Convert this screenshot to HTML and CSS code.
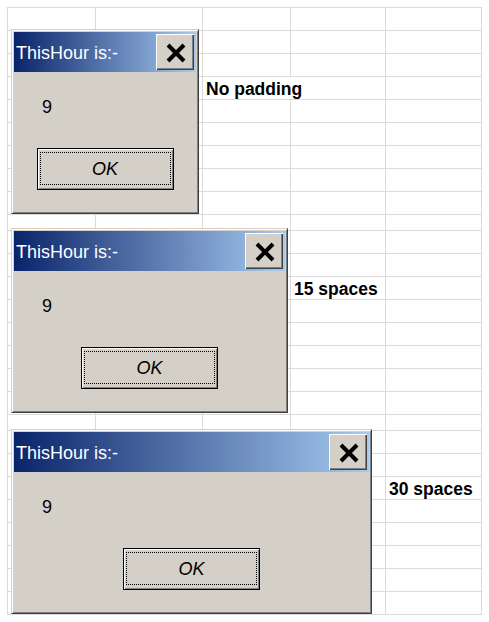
FILE: index.html
```html
<!DOCTYPE html>
<html lang="en">
<head>
<meta charset="utf-8">
<title>ThisHour message boxes</title>
<link rel="stylesheet" href="styles.css">
</head>
<body>
<div class="sheet">
  <div class="cell"></div><div class="cell"></div><div class="cell"></div><div class="cell"></div><div class="cell"></div>
  <div class="cell"></div><div class="cell"></div><div class="cell"></div><div class="cell"></div><div class="cell"></div>
  <div class="cell"></div><div class="cell"></div><div class="cell"></div><div class="cell"></div><div class="cell"></div>
  <div class="cell"></div><div class="cell"></div><div class="cell label span2">No padding</div><div class="cell"></div>
  <div class="cell"></div><div class="cell"></div><div class="cell"></div><div class="cell"></div><div class="cell"></div>
  <div class="cell"></div><div class="cell"></div><div class="cell"></div><div class="cell"></div><div class="cell"></div>
  <div class="cell"></div><div class="cell"></div><div class="cell"></div><div class="cell"></div><div class="cell"></div>
  <div class="cell"></div><div class="cell"></div><div class="cell"></div><div class="cell"></div><div class="cell"></div>
  <div class="cell"></div><div class="cell"></div><div class="cell"></div><div class="cell"></div><div class="cell"></div>
  <div class="cell"></div><div class="cell"></div><div class="cell"></div><div class="cell"></div><div class="cell"></div>
  <div class="cell"></div><div class="cell"></div><div class="cell"></div><div class="cell"></div><div class="cell"></div>
  <div class="cell"></div><div class="cell"></div><div class="cell"></div><div class="cell"></div><div class="cell"></div>
  <div class="cell"></div><div class="cell"></div><div class="cell"></div><div class="cell label">15 spaces</div><div class="cell"></div>
  <div class="cell"></div><div class="cell"></div><div class="cell"></div><div class="cell"></div><div class="cell"></div>
  <div class="cell"></div><div class="cell"></div><div class="cell"></div><div class="cell"></div><div class="cell"></div>
  <div class="cell"></div><div class="cell"></div><div class="cell"></div><div class="cell"></div><div class="cell"></div>
  <div class="cell"></div><div class="cell"></div><div class="cell"></div><div class="cell"></div><div class="cell"></div>
  <div class="cell"></div><div class="cell"></div><div class="cell"></div><div class="cell"></div><div class="cell"></div>
  <div class="cell"></div><div class="cell"></div><div class="cell"></div><div class="cell"></div><div class="cell"></div>
  <div class="cell"></div><div class="cell"></div><div class="cell"></div><div class="cell"></div><div class="cell"></div>
  <div class="cell"></div><div class="cell"></div><div class="cell"></div><div class="cell"></div><div class="cell"></div>
  <div class="cell"></div><div class="cell"></div><div class="cell"></div><div class="cell"></div><div class="cell label">30 spaces</div>
  <div class="cell"></div><div class="cell"></div><div class="cell"></div><div class="cell"></div><div class="cell"></div>
  <div class="cell"></div><div class="cell"></div><div class="cell"></div><div class="cell"></div><div class="cell"></div>
  <div class="cell"></div><div class="cell"></div><div class="cell"></div><div class="cell"></div><div class="cell"></div>
  <div class="cell"></div><div class="cell"></div><div class="cell"></div><div class="cell"></div><div class="cell"></div>
  <div class="cell"></div><div class="cell"></div><div class="cell"></div><div class="cell"></div><div class="cell"></div>
</div>

<div class="msgbox msgbox-1">
  <div class="titlebar">
    <span class="title">ThisHour is:-</span>
    <button class="close" type="button" aria-label="Close"><svg width="20" height="20" viewBox="0 0 20 20"><path d="M2 2L18 18M18 2L2 18" stroke="#000" stroke-width="4" fill="none"/></svg></button>
  </div>
  <div class="content">
    <div class="prompt">9</div>
    <button class="ok" type="button">OK</button>
  </div>
</div>

<div class="msgbox msgbox-2">
  <div class="titlebar">
    <span class="title">ThisHour is:-               </span>
    <button class="close" type="button" aria-label="Close"><svg width="20" height="20" viewBox="0 0 20 20"><path d="M2 2L18 18M18 2L2 18" stroke="#000" stroke-width="4" fill="none"/></svg></button>
  </div>
  <div class="content">
    <div class="prompt">9</div>
    <button class="ok" type="button">OK</button>
  </div>
</div>

<div class="msgbox msgbox-3">
  <div class="titlebar">
    <span class="title">ThisHour is:-                              </span>
    <button class="close" type="button" aria-label="Close"><svg width="20" height="20" viewBox="0 0 20 20"><path d="M2 2L18 18M18 2L2 18" stroke="#000" stroke-width="4" fill="none"/></svg></button>
  </div>
  <div class="content">
    <div class="prompt">9</div>
    <button class="ok" type="button">OK</button>
  </div>
</div>
</body>
</html>
```

FILE: styles.css
```css
* {
  box-sizing: border-box;
}

body {
  margin: 0;
  background: #fff;
  position: relative;
  width: 489px;
  height: 622px;
  overflow: hidden;
  font-family: "Liberation Sans", Arial, sans-serif;
}

.sheet {
  margin: 7px 0 0 7px;
  width: 475px;
  display: grid;
  grid-template-columns: 87px 106px 87px 94px 95px;
  grid-template-rows: repeat(9, 22px) 15px repeat(8, 22px) 15px repeat(8, 22px);
  gap: 1px;
  background: #dadada;
  border: 1px solid #dadada;
}

.cell {
  background: #fff;
}

.label {
  display: flex;
  align-items: flex-end;
  padding-left: 3px;
  font-size: 17.5px;
  font-weight: bold;
  line-height: 20px;
  color: #000;
  white-space: nowrap;
}

.span2 {
  grid-column: span 2;
}

.msgbox {
  position: absolute;
  left: 11px;
  height: 185px;
  display: flex;
  flex-direction: column;
  padding: 2px;
  background: #d4d0c8;
  border: 1px solid;
  border-color: #d4d0c8 #404040 #404040 #d4d0c8;
  box-shadow: inset 1px 1px 0 #fff, inset -1px -1px 0 #808080;
}

.msgbox-1 {
  top: 29px;
  width: 188px;
}

.msgbox-2 {
  top: 228px;
  width: 277px;
}

.msgbox-3 {
  top: 429px;
  width: 361px;
}

.titlebar {
  height: 40px;
  flex: none;
  display: flex;
  align-items: center;
  justify-content: space-between;
  padding: 0 2px;
  background: linear-gradient(to right, #0a246a, #a6caf0);
}

.title {
  margin-top: 2px;
  color: #fff;
  font-size: 18px;
  line-height: 20px;
  white-space: pre;
}

.close {
  width: 38px;
  height: 36px;
  flex: none;
  display: flex;
  align-items: center;
  justify-content: center;
  padding: 0;
  border: 0;
  background: #d4d0c8;
  box-shadow: inset 1px 1px 0 #fff, inset -1px -1px 0 #404040, inset -2px -2px 0 #808080;
}

.close svg {
  display: block;
  margin: 1px 0 0 2px;
}

.content {
  flex: 1;
  display: flex;
  flex-direction: column;
  padding-top: 25px;
}

.prompt {
  padding-left: 28px;
  font-size: 18px;
  line-height: 21px;
  color: #000;
}

.ok {
  position: relative;
  align-self: center;
  margin-top: 30px;
  width: 137px;
  height: 42px;
  padding: 0;
  border: 1px solid #000;
  background: #d4d0c8;
  box-shadow: inset 1px 1px 0 #fff, inset -1px -1px 0 #808080;
  font-family: "Liberation Sans", Arial, sans-serif;
  font-size: 18px;
  font-style: italic;
  color: #000;
}

.ok::after {
  content: "";
  position: absolute;
  top: 3px;
  left: 2px;
  right: 2px;
  bottom: 4px;
  border: 1px dotted #000;
}
```
